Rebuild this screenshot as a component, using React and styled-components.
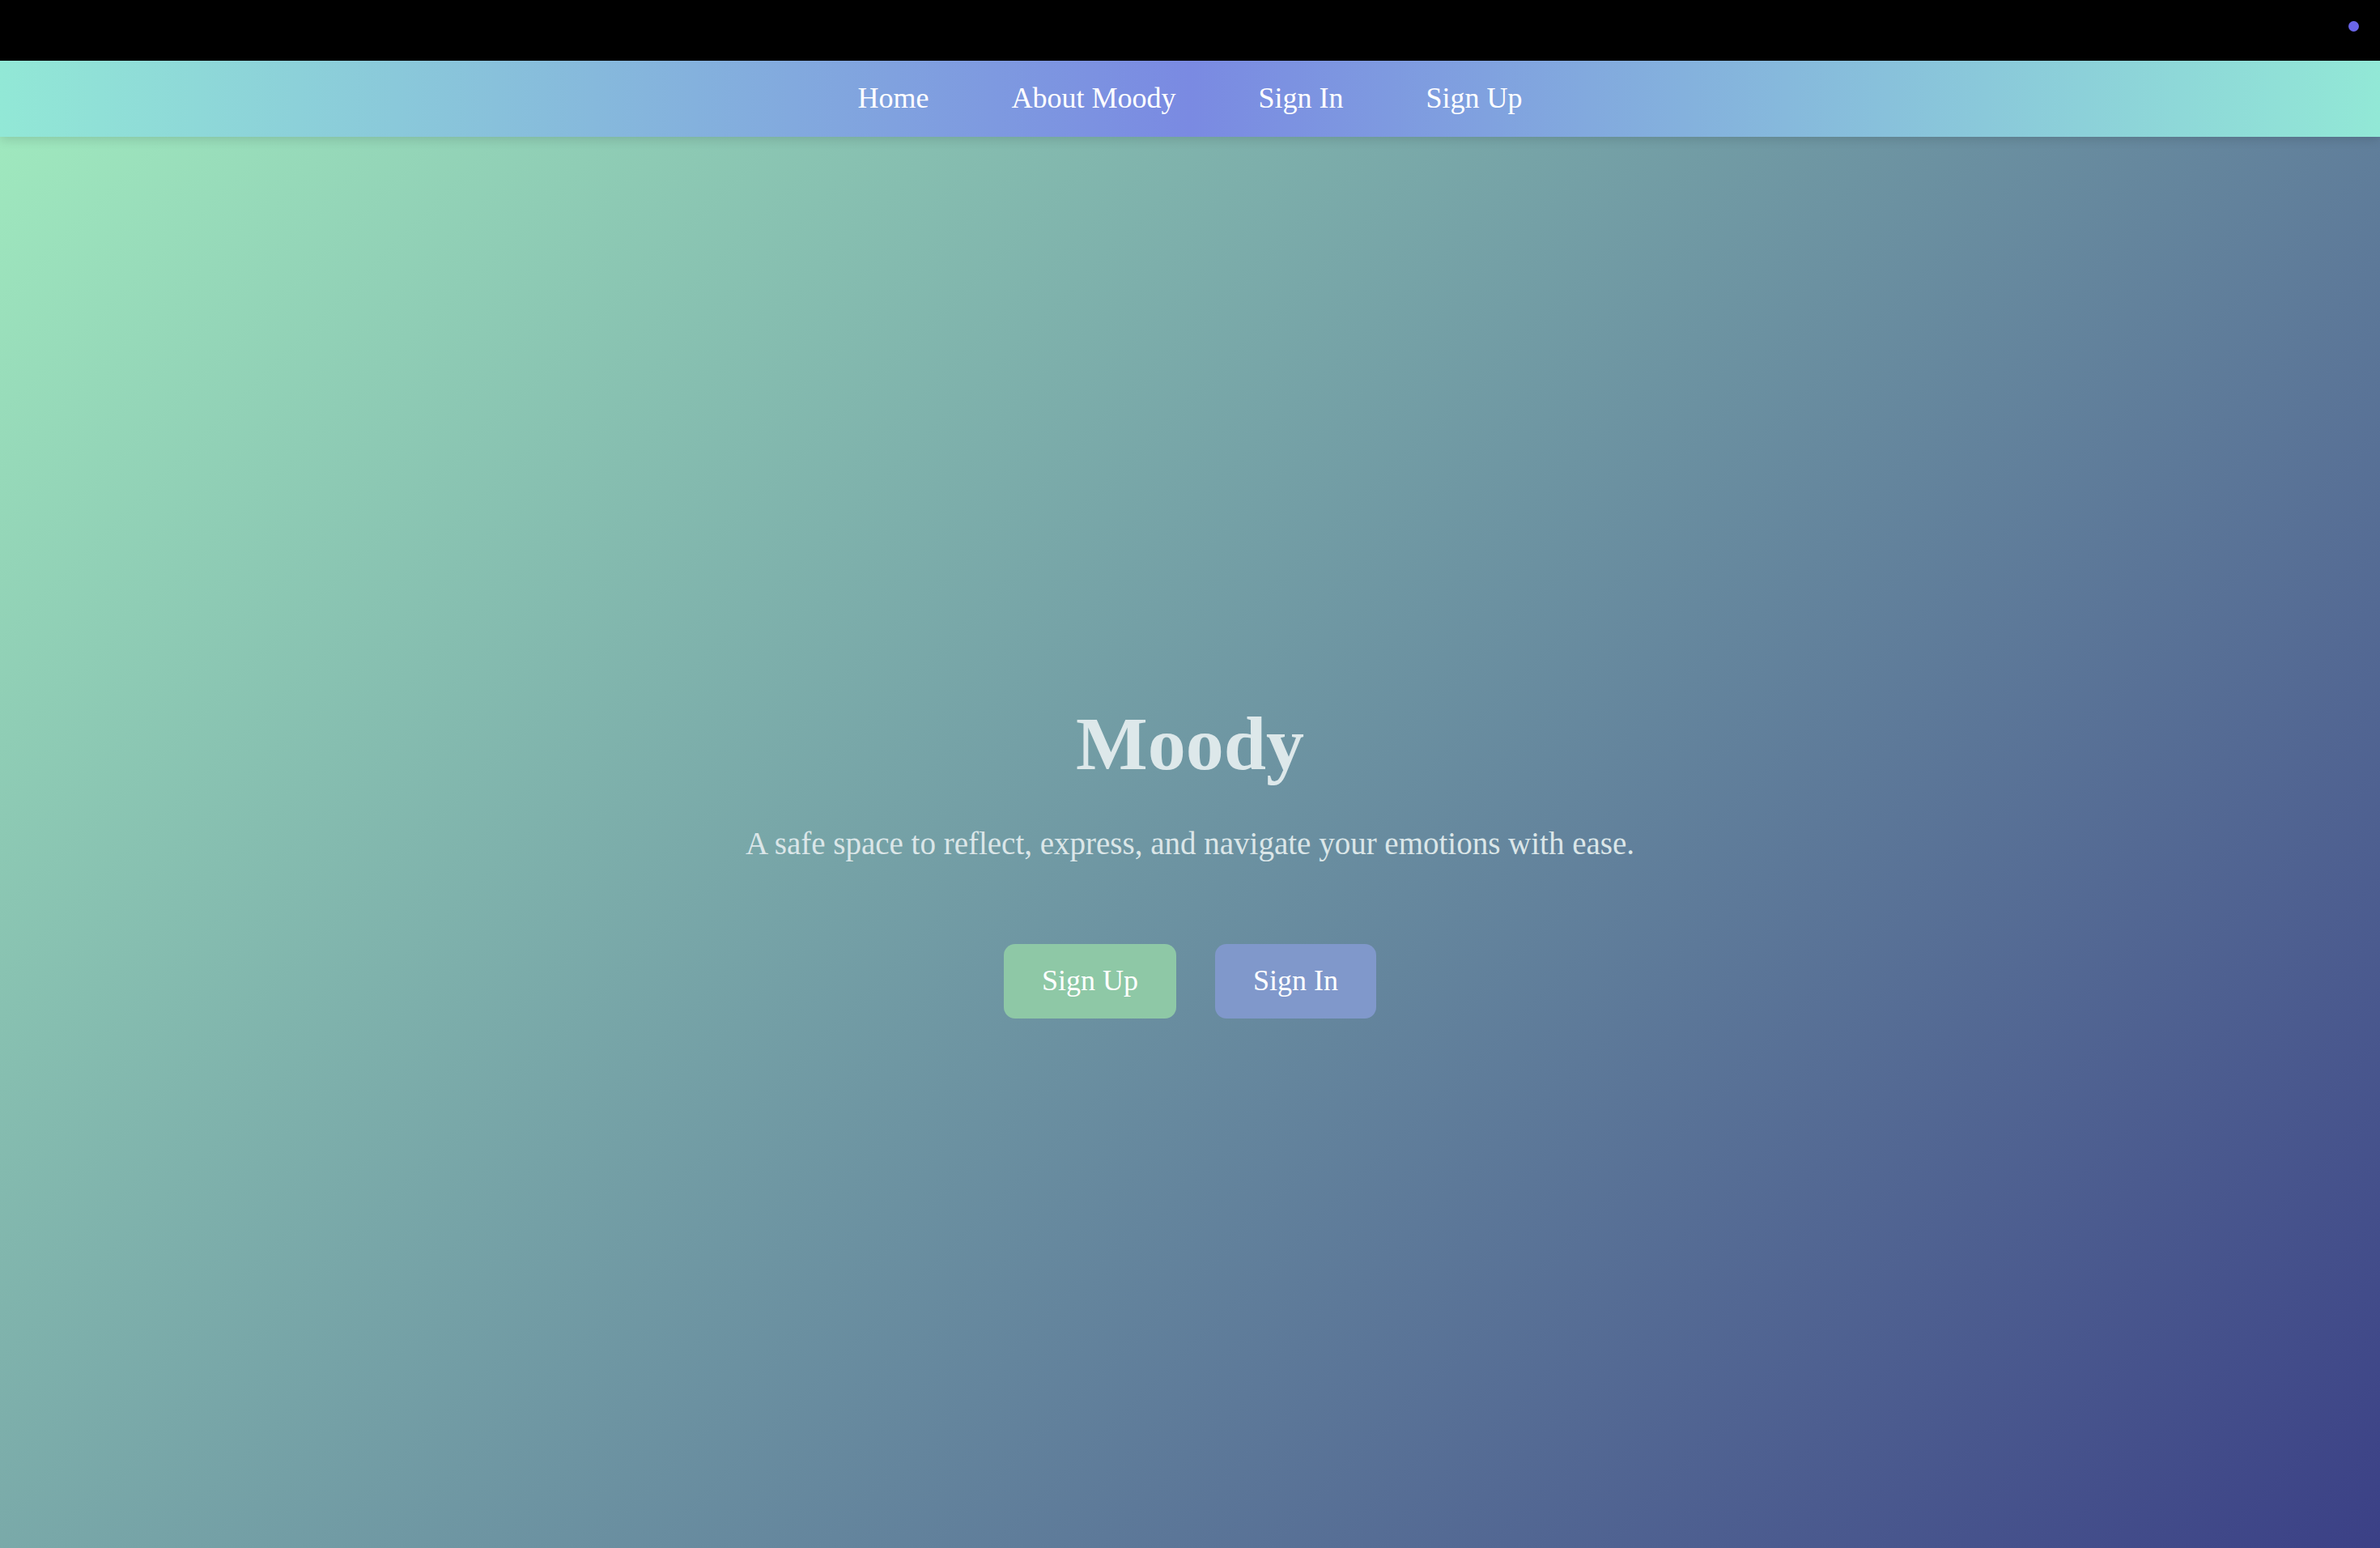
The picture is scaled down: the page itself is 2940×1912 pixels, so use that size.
import React from "react";
import styled, { createGlobalStyle } from "styled-components";

const GlobalStyle = createGlobalStyle`
  html, body {
    margin: 0;
    padding: 0;
    background: #000;
  }
  body {
    font-family: "Liberation Serif", "Times New Roman", serif;
  }
  * {
    box-sizing: border-box;
  }
`;

const navLinks = ["Home", "About Moody", "Sign In", "Sign Up"];

const App = () => {
  return (
    <>
      <GlobalStyle />
      <Page>
        <TopStrip>
          <StatusDot />
        </TopStrip>
        <NavBar>
          {navLinks.map((label) => (
            <NavLink key={label} href="#">
              {label}
            </NavLink>
          ))}
        </NavBar>
        <Hero>
          <Title>Moody</Title>
          <Tagline>
            A safe space to reflect, express, and navigate your emotions with
            ease.
          </Tagline>
          <ButtonRow>
            <ActionButton $variant="up">Sign Up</ActionButton>
            <ActionButton $variant="in">Sign In</ActionButton>
          </ButtonRow>
        </Hero>
      </Page>
    </>
  );
};

const Page = styled.div`
  display: flex;
  flex-direction: column;
  min-height: 100vh;
  width: 100%;
`;

const TopStrip = styled.div`
  height: 75px;
  background: #000;
  display: flex;
  justify-content: flex-end;
  align-items: flex-start;
  padding: 26px 26px 0 0;
`;

const StatusDot = styled.span`
  width: 13px;
  height: 13px;
  border-radius: 50%;
  background: #6a65e8;
`;

const NavBar = styled.nav`
  position: relative;
  z-index: 1;
  height: 94px;
  display: flex;
  align-items: center;
  justify-content: center;
  gap: 102px;
  background: linear-gradient(90deg, #92e8d6 0%, #7a8ae2 50%, #92e8d6 100%);
  box-shadow: 0 4px 12px rgba(0, 0, 0, 0.12);
`;

const NavLink = styled.a`
  color: #fff;
  font-size: 36px;
  line-height: 1.2;
  text-decoration: none;
`;

const Hero = styled.main`
  flex: 1;
  display: flex;
  flex-direction: column;
  align-items: center;
  justify-content: center;
  padding-top: 38px;
  background: linear-gradient(135deg, #9fe8be 0%, #3b4086 100%);
`;

const Title = styled.h1`
  margin: 0;
  font-size: 94px;
  line-height: 1.2;
  font-weight: bold;
  color: #dde8ea;
`;

const Tagline = styled.p`
  margin: 45px 0 0;
  font-size: 39px;
  line-height: 1.18;
  color: #dbe6e8;
`;

const ButtonRow = styled.div`
  display: flex;
  gap: 48px;
  margin-top: 101px;
`;

const ActionButton = styled.button`
  font-family: inherit;
  font-size: 36px;
  line-height: 1.2;
  color: #fff;
  border: none;
  border-radius: 14px;
  padding: 24px 47px;
  cursor: pointer;
  background: ${(p) => (p.$variant === "up" ? "#8ec8a6" : "#8098cb")};
`;

export default App;
